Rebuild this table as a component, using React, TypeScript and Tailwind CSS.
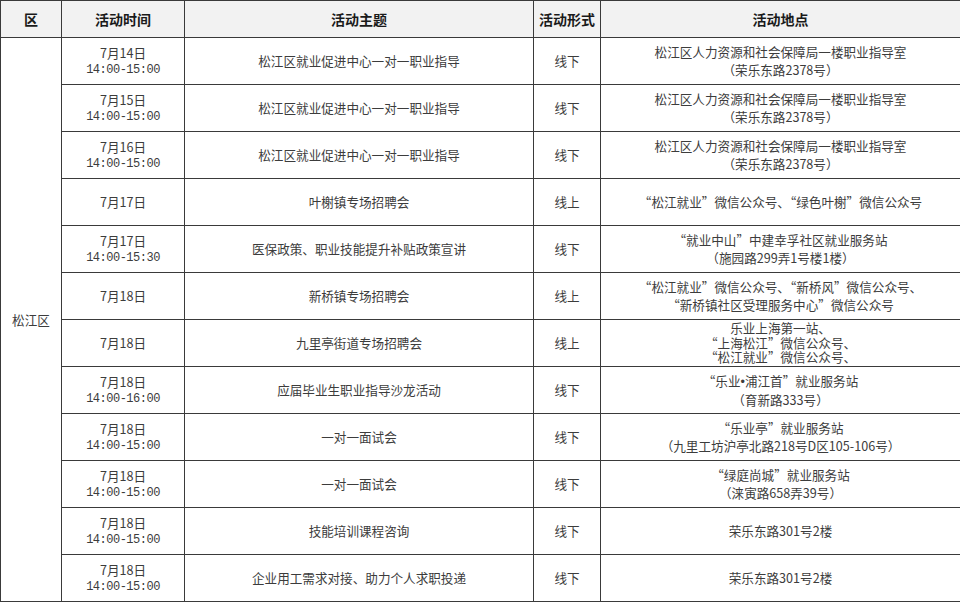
const rows: { date: string; time?: string; topic: string; mode: string; place: React.ReactNode[] }[] = [
  { date: "7月14日", time: "14:00-15:00", topic: "松江区就业促进中心一对一职业指导", mode: "线下", place: ["松江区人力资源和社会保障局一楼职业指导室", "（荣乐东路2378号）"] },
  { date: "7月15日", time: "14:00-15:00", topic: "松江区就业促进中心一对一职业指导", mode: "线下", place: ["松江区人力资源和社会保障局一楼职业指导室", "（荣乐东路2378号）"] },
  { date: "7月16日", time: "14:00-15:00", topic: "松江区就业促进中心一对一职业指导", mode: "线下", place: ["松江区人力资源和社会保障局一楼职业指导室", "（荣乐东路2378号）"] },
  { date: "7月17日", topic: "叶榭镇专场招聘会", mode: "线上", place: ["“松江就业”微信公众号、“绿色叶榭”微信公众号"] },
  { date: "7月17日", time: "14:00-15:30", topic: "医保政策、职业技能提升补贴政策宣讲", mode: "线下", place: ["“就业中山”中建幸孚社区就业服务站", "（施园路299弄1号楼1楼）"] },
  { date: "7月18日", topic: "新桥镇专场招聘会", mode: "线上", place: ["“松江就业”微信公众号、“新桥风”微信公众号、", "“新桥镇社区受理服务中心”微信公众号"] },
  { date: "7月18日", topic: "九里亭街道专场招聘会", mode: "线上", place: ["乐业上海第一站、", "“上海松江”微信公众号、", "“松江就业”微信公众号、"] },
  {
    date: "7月18日",
    time: "14:00-16:00",
    topic: "应届毕业生职业指导沙龙活动",
    mode: "线下",
    place: [
      <>
        “乐业<span className="font-['Liberation_Sans',sans-serif]">•</span>浦江首”就业服务站
      </>,
      "（育新路333号）",
    ],
  },
  { date: "7月18日", time: "14:00-15:00", topic: "一对一面试会", mode: "线下", place: ["“乐业亭”就业服务站", "（九里工坊沪亭北路218号D区105-106号）"] },
  { date: "7月18日", time: "14:00-15:00", topic: "一对一面试会", mode: "线下", place: ["“绿庭尚城”就业服务站", "（涞寅路658弄39号）"] },
  { date: "7月18日", time: "14:00-15:00", topic: "技能培训课程咨询", mode: "线下", place: ["荣乐东路301号2楼"] },
  { date: "7月18日", time: "14:00-15:00", topic: "企业用工需求对接、助力个人求职投递", mode: "线下", place: ["荣乐东路301号2楼"] },
];

const cell = "border border-[#3a3a3a] text-center align-middle p-0";

export default function App() {
  return (
    <div className="w-[960px] h-[602px] overflow-hidden bg-white text-[#3c3c3c] text-[12.6px] leading-[18px] font-['Noto_Sans_CJK_SC','Liberation_Sans',sans-serif]">
      <table className="border-collapse table-fixed w-[960px]">
        <colgroup>
          <col className="w-[61px]" />
          <col className="w-[123px]" />
          <col className="w-[349px]" />
          <col className="w-[67px]" />
          <col className="w-[360px]" />
        </colgroup>
        <thead>
          <tr className="h-[37px] bg-[#f2f2f2] text-[14px] font-bold text-[#1a1a1a]">
            <th className={cell}>区</th>
            <th className={cell}>活动时间</th>
            <th className={cell}>活动主题</th>
            <th className={cell}>活动形式</th>
            <th className={cell}>活动地点</th>
          </tr>
        </thead>
        <tbody>
          {rows.map((r, i) => (
            <tr key={i} className="h-[47px]">
              {i === 0 && (
                <td rowSpan={rows.length} className={cell}>
                  松江区
                </td>
              )}
              <td className={cell}>
                <div>{r.date}</div>
                {r.time && (
                  <div className="font-['Liberation_Mono',monospace] text-[12px] leading-[16px] tracking-[-0.5px]">
                    {r.time}
                  </div>
                )}
              </td>
              <td className={cell}>{r.topic}</td>
              <td className={cell}>{r.mode}</td>
              <td className={cell + (r.place.length > 2 ? " leading-[14.5px]" : "")}>
                {r.place.map((p, j) => (
                  <div key={j}>{p}</div>
                ))}
              </td>
            </tr>
          ))}
        </tbody>
      </table>
    </div>
  );
}
